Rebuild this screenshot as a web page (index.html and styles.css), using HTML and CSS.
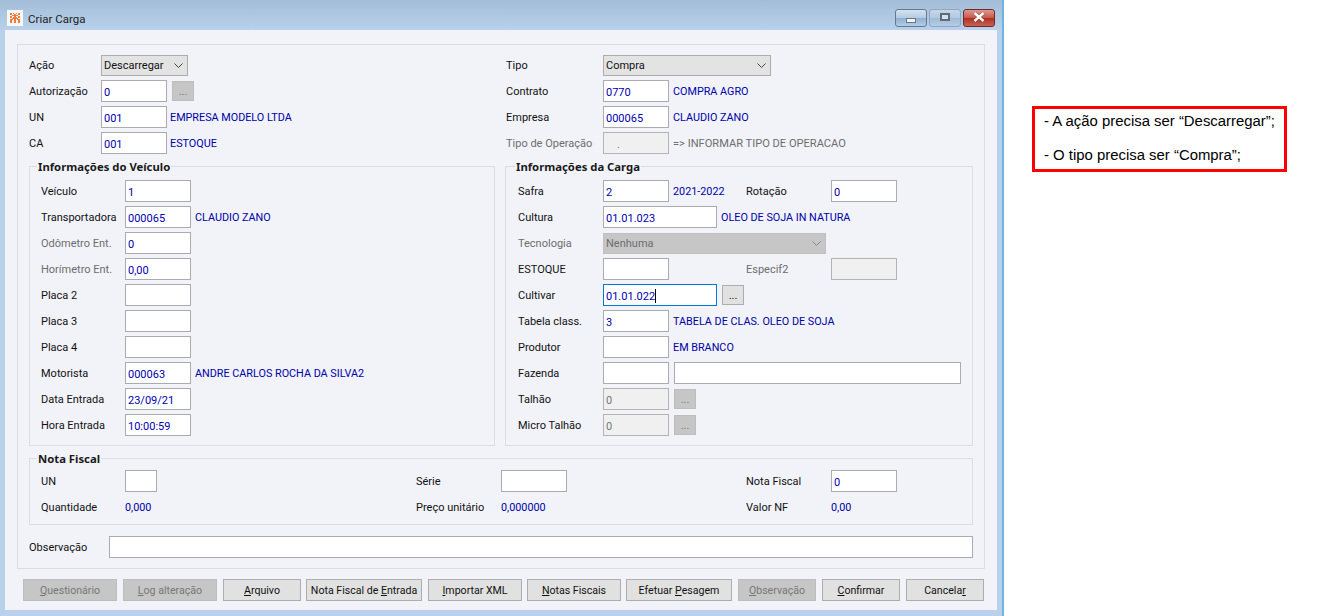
FILE: index.html
```html
<!DOCTYPE html>
<html lang="pt">
<head>
<meta charset="utf-8">
<title>Criar Carga</title>
<link rel="stylesheet" href="styles.css">
</head>
<body>
<div class="window">
  <div class="titlebar">
    <svg class="app-icon" viewBox="0 0 16 16" width="16" height="16"><rect width="16" height="16" fill="#f8f8f8"/><path d="M3 3h2v2H3zM6 3h1v1H6zM9 3h1v1H9zM11 3h2v2h-2zM5 5h2v1H5zM7 4h2v3H7zM9 5h2v1H9zM3 6h2v2H3zM11 6h2v2h-2zM6 7h4v2H6zM3 9h2v4H3zM5 8h1v2H5zM7 9h2v4H7zM10 8h1v2h-1zM11 9h2v4h-2z" fill="#f47a3c"/></svg>
    <span class="title-text">Criar Carga</span>
    <div class="caption-buttons">
      <div class="cap cap-min"><span class="glyph-min"></span></div>
      <div class="cap cap-max"><span class="glyph-max"></span></div>
      <div class="cap cap-close"><svg class="glyph-close" viewBox="0 0 14 10" width="14" height="10"><path d="M2.5 1 11.5 9M11.5 1 2.5 9" stroke="#5a3030" stroke-width="3.6" fill="none" opacity=".55"/><path d="M2.5 1 11.5 9M11.5 1 2.5 9" stroke="#fff" stroke-width="2.4" fill="none"/></svg></div>
    </div>
  </div>
  <div class="client">
    <div class="panel">
      <div class="columns">
        <div>
          <div class="row"><span class="lbl lbl-top">Ação</span><div class="select w87"><span>Descarregar</span><svg class="chev" viewBox="0 0 9 5" width="9" height="5"><path d="M.5.5 4.5 4.5 8.5.5" fill="none" stroke="#444"/></svg></div></div>
          <div class="row"><span class="lbl lbl-top">Autorização</span><div class="input w66">0</div><div class="dots dis ml5">...</div></div>
          <div class="row"><span class="lbl lbl-top">UN</span><div class="input w66">001</div><span class="val val-left">EMPRESA MODELO LTDA</span></div>
          <div class="row"><span class="lbl lbl-top">CA</span><div class="input w66">001</div><span class="val val-left">ESTOQUE</span></div>
        </div>
        <div>
          <div class="row"><span class="lbl lbl-top2">Tipo</span><div class="select w168"><span>Compra</span><svg class="chev" viewBox="0 0 9 5" width="9" height="5"><path d="M.5.5 4.5 4.5 8.5.5" fill="none" stroke="#444"/></svg></div></div>
          <div class="row"><span class="lbl lbl-top2">Contrato</span><div class="input w66">0770</div><span class="val">COMPRA AGRO</span></div>
          <div class="row"><span class="lbl lbl-top2">Empresa</span><div class="input w66">000065</div><span class="val">CLAUDIO ZANO</span></div>
          <div class="row"><span class="lbl lbl-top2 muted">Tipo de Operação</span><div class="input w66 off indent">.</div><span class="val gray">=&gt; INFORMAR TIPO DE OPERACAO</span></div>
        </div>
      </div>
      <div class="columns cols-groups">
        <div class="group">
          <span class="legend">Informações do Veículo</span>
          <div class="row"><span class="lbl">Veículo</span><div class="input w66">1</div></div>
          <div class="row"><span class="lbl">Transportadora</span><div class="input w66">000065</div><span class="val">CLAUDIO ZANO</span></div>
          <div class="row"><span class="lbl muted">Odômetro Ent.</span><div class="input w66">0</div></div>
          <div class="row"><span class="lbl muted">Horímetro Ent.</span><div class="input w66">0,00</div></div>
          <div class="row"><span class="lbl">Placa 2</span><div class="input w66"></div></div>
          <div class="row"><span class="lbl">Placa 3</span><div class="input w66"></div></div>
          <div class="row"><span class="lbl">Placa 4</span><div class="input w66"></div></div>
          <div class="row"><span class="lbl">Motorista</span><div class="input w66">000063</div><span class="val">ANDRE CARLOS ROCHA DA SILVA2</span></div>
          <div class="row"><span class="lbl">Data Entrada</span><div class="input w66">23/09/21</div></div>
          <div class="row"><span class="lbl">Hora Entrada</span><div class="input w66">10:00:59</div></div>
        </div>
        <div class="group group-r">
          <span class="legend">Informações da Carga</span>
          <div class="row"><span class="lbl lbl-r">Safra</span><div class="input w66">2</div><span class="val val-short">2021-2022</span><span class="lbl lbl-side">Rotação</span><div class="input w66">0</div></div>
          <div class="row"><span class="lbl lbl-r">Cultura</span><div class="input w114">01.01.023</div><span class="val">OLEO DE SOJA IN NATURA</span></div>
          <div class="row"><span class="lbl lbl-r muted">Tecnologia</span><div class="select select-off w223"><span>Nenhuma</span><svg class="chev" viewBox="0 0 9 5" width="9" height="5"><path d="M.5.5 4.5 4.5 8.5.5" fill="none" stroke="#8a8a8a"/></svg></div></div>
          <div class="row"><span class="lbl lbl-r">ESTOQUE</span><div class="input w66"></div><span class="val val-short"></span><span class="lbl lbl-side muted">Especif2</span><div class="input w66 off"></div></div>
          <div class="row"><span class="lbl lbl-r">Cultivar</span><div class="input w114 focus">01.01.022<i class="caret"></i></div><div class="dots ml5">...</div></div>
          <div class="row"><span class="lbl lbl-r">Tabela class.</span><div class="input w66">3</div><span class="val">TABELA DE CLAS. OLEO DE SOJA</span></div>
          <div class="row"><span class="lbl lbl-r">Produtor</span><div class="input w66"></div><span class="val">EM BRANCO</span></div>
          <div class="row"><span class="lbl lbl-r">Fazenda</span><div class="input w66"></div><div class="input w287 ml5"></div></div>
          <div class="row"><span class="lbl lbl-r">Talhão</span><div class="input w66 off">0</div><div class="dots dis ml5">...</div></div>
          <div class="row"><span class="lbl lbl-r">Micro Talhão</span><div class="input w66 off">0</div><div class="dots dis ml5">...</div></div>
        </div>
      </div>
      <div class="group group-nf">
        <span class="legend">Nota Fiscal</span>
        <div class="nf-grid">
          <div class="row"><span class="lbl">UN</span><div class="input w32"></div></div>
          <div class="row"><span class="lbl lbl-r">Série</span><div class="input w66"></div></div>
          <div class="row"><span class="lbl lbl-r">Nota Fiscal</span><div class="input w66">0</div></div>
          <div class="row"><span class="lbl">Quantidade</span><span class="val val-flush">0,000</span></div>
          <div class="row"><span class="lbl lbl-r">Preço unitário</span><span class="val val-flush">0,000000</span></div>
          <div class="row"><span class="lbl lbl-r">Valor NF</span><span class="val val-flush">0,00</span></div>
        </div>
      </div>
      <div class="row row-obs"><span class="lbl lbl-obs">Observação</span><div class="input w864"></div></div>
    </div>
    <div class="actions">
      <div class="btn b94 dis"><u>Q</u>uestionário</div>
      <div class="btn b94 dis"><u>L</u>og alteração</div>
      <div class="btn b78"><u>A</u>rquivo</div>
      <div class="btn b116 tight">Nota Fiscal de <u>E</u>ntrada</div>
      <div class="btn b94"><u>I</u>mportar XML</div>
      <div class="btn b94 tight"><u>N</u>otas Fiscais</div>
      <div class="btn b106 tight">Efetuar <u>P</u>esagem</div>
      <div class="btn b78 dis"><u>O</u>bservação</div>
      <div class="btn b78"><u>C</u>onfirmar</div>
      <div class="btn b78">Cancela<u>r</u></div>
    </div>
  </div>
</div>
<div class="note">
  <p>- A ação precisa ser “Descarregar”;</p>
  <p>- O tipo precisa ser “Compra”;</p>
</div>
</body>
</html>
```
FILE: styles.css
```css
* { box-sizing: border-box; }
html, body { margin: 0; padding: 0; background: #fff; }
body {
  width: 1329px;
  height: 616px;
  overflow: hidden;
  display: flex;
  align-items: flex-start;
  font: 11px Roboto, sans-serif;
  color: #111;
}
.window {
  width: 1004px;
  height: 616px;
  background: #b9d1ea;
  border-right: 2px solid #6db3e3;
  flex: none;
}
.titlebar {
  height: 30px;
  display: flex;
  align-items: center;
  padding-left: 7px;
  background: linear-gradient(#a3bdd8, #b9d1ea);
  position: relative;
}
.app-icon { flex: none; margin-top: 6px; }
.title-text { margin-left: 5px; margin-top: 7px; font-size: 11.5px; color: #222; }
.caption-buttons { margin-left: auto; margin-right: 7px; display: flex; gap: 2px; align-self: flex-start; margin-top: 9px; }
.cap {
  height: 18px;
  width: 32px;
  border: 1px solid #66788e;
  border-radius: 3px;
  display: flex;
  align-items: center;
  justify-content: center;
  background: linear-gradient(#d5e2ef 0, #b5cbe2 48%, #8fb0d2 52%, #b4cde6 100%);
}
.cap-max { border-color: #8ea6bf; background: linear-gradient(#c6d7e8 0, #b2c9e0 48%, #9fbbd7 52%, #b4cde6 100%); }
.cap-close {
  border-color: #6e2a2a;
  background: linear-gradient(#dd9a90 0, #c8594c 48%, #b0301f 52%, #c66458 100%);
}
.glyph-min { width: 10px; height: 5px; background: #f2f5f8; border: 1px solid #6a7785; margin-top: 4px; }
.glyph-max { width: 10px; height: 8px; border: 2px solid #5e6b79; background: #d5e0eb; margin-top: -2px; }
.glyph-close { margin-top: -2px; }
.client {
  margin-left: 5px;
  width: 992px;
  height: 580px;
  background: #f1f3f9;
  padding: 14px 12px 0;
}
.panel {
  width: 968px;
  height: 525px;
  border: 1px solid #dcdde0;
  padding: 7px 11px 0;
}
.columns {
  display: grid;
  grid-template-columns: 466px 468px;
  gap: 10px;
}
.cols-groups { margin-top: 10px; }
.row { height: 26px; display: flex; align-items: center; position: relative; white-space: nowrap; }
.lbl { flex: none; width: 84px; }
.lbl-top { width: 72px; }
.lbl-top2 { width: 98px; padding-left: 1px; }
.lbl-r { width: 85px; }
.lbl-side { width: 85px; }
.lbl-obs { width: 80px; }
.muted { color: #6d6d6d; }
.group {
  position: relative;
  border: 1px solid #dcdde0;
  padding: 11px 11px 7px;
}
.group-r { padding-left: 12px; }
.legend {
  position: absolute;
  left: 7px;
  top: -8px;
  padding: 0 1px;
  background: #f1f3f9;
  font: 700 11.3px/15px "Noto Sans", sans-serif;
  color: #1a1a1a;
}
.group-r .legend { left: 9px; }
.group-nf { margin-top: 12px; height: 67px; padding: 9px 11px 0; width: 944px; }
.nf-grid { display: grid; grid-template-columns: 375px 330px 1fr; }
.row-obs { margin-top: 9px; }
.input {
  flex: none;
  height: 22px;
  background: #fff;
  border: 1px solid #a9abb1;
  color: #0000b0;
  padding: 3px 2px 0;
  line-height: 17px;
}
.off { background: #f0f0f0; color: #777; border-color: #b4b4b4; }
.indent { padding-left: 13px; }
.focus { border-color: #0078d7; position: relative; }
.caret { display: inline-block; width: 1px; height: 14px; background: #000; vertical-align: -3px; }
.w32 { width: 32px; }
.w66 { width: 66px; }
.w114 { width: 114px; }
.w287 { width: 287px; }
.w864 { width: 864px; }
.w87 { width: 87px; }
.w168 { width: 168px; }
.w223 { width: 223px; }
.select {
  flex: none;
  height: 21px;
  display: flex;
  align-items: center;
  justify-content: space-between;
  background: #e3e3e3;
  border: 1px solid #acacac;
  padding: 0 4px 0 2px;
  color: #111;
}
.select-off { background: #c6c6c6; border-color: #c0c0c0; color: #6d6d6d; }
.chev { flex: none; }
.val { margin-left: 4px; color: #0000a8; font-size: 10.8px; }
.val-left { margin-left: 3px; }
.val-short { width: 73px; flex: none; }
.val-flush { margin-left: 0; }
.gray { color: #6d6d6d; font-size: 11.1px; }
.dots {
  flex: none;
  width: 22px;
  height: 20px;
  background: #e1e1e1;
  border: 1px solid #adadad;
  display: flex;
  align-items: center;
  justify-content: center;
}
.dots.dis { background: #c6c6c6; border-color: #bdbdbd; color: #777; }
.ml5 { margin-left: 5px; }
.actions { display: flex; margin-top: 10px; padding-left: 6px; gap: 6px; }
.btn {
  flex: none;
  height: 22px;
  background: #e1e1e1;
  border: 1px solid #adadad;
  display: flex;
  align-items: center;
  justify-content: center;
  white-space: pre;
  color: #111;
  font-size: 10.6px;
}
.btn.dis { background: #c6c6c6; border-color: #bdbdbd; color: #777; }
.tight { margin-left: -1px; }
.b78 { width: 78px; }
.b94 { width: 94px; }
.b106 { width: 106px; }
.b116 { width: 116px; }
.note {
  flex: none;
  width: 255px;
  height: 66px;
  margin: 106px 0 0 28px;
  border: 3px solid #f00;
  padding: 2px 0 0 9px;
  font: 14.9px "Liberation Sans", sans-serif;
  color: #000;
}
.note p { margin: 0 0 14px; line-height: 20px; }
```
